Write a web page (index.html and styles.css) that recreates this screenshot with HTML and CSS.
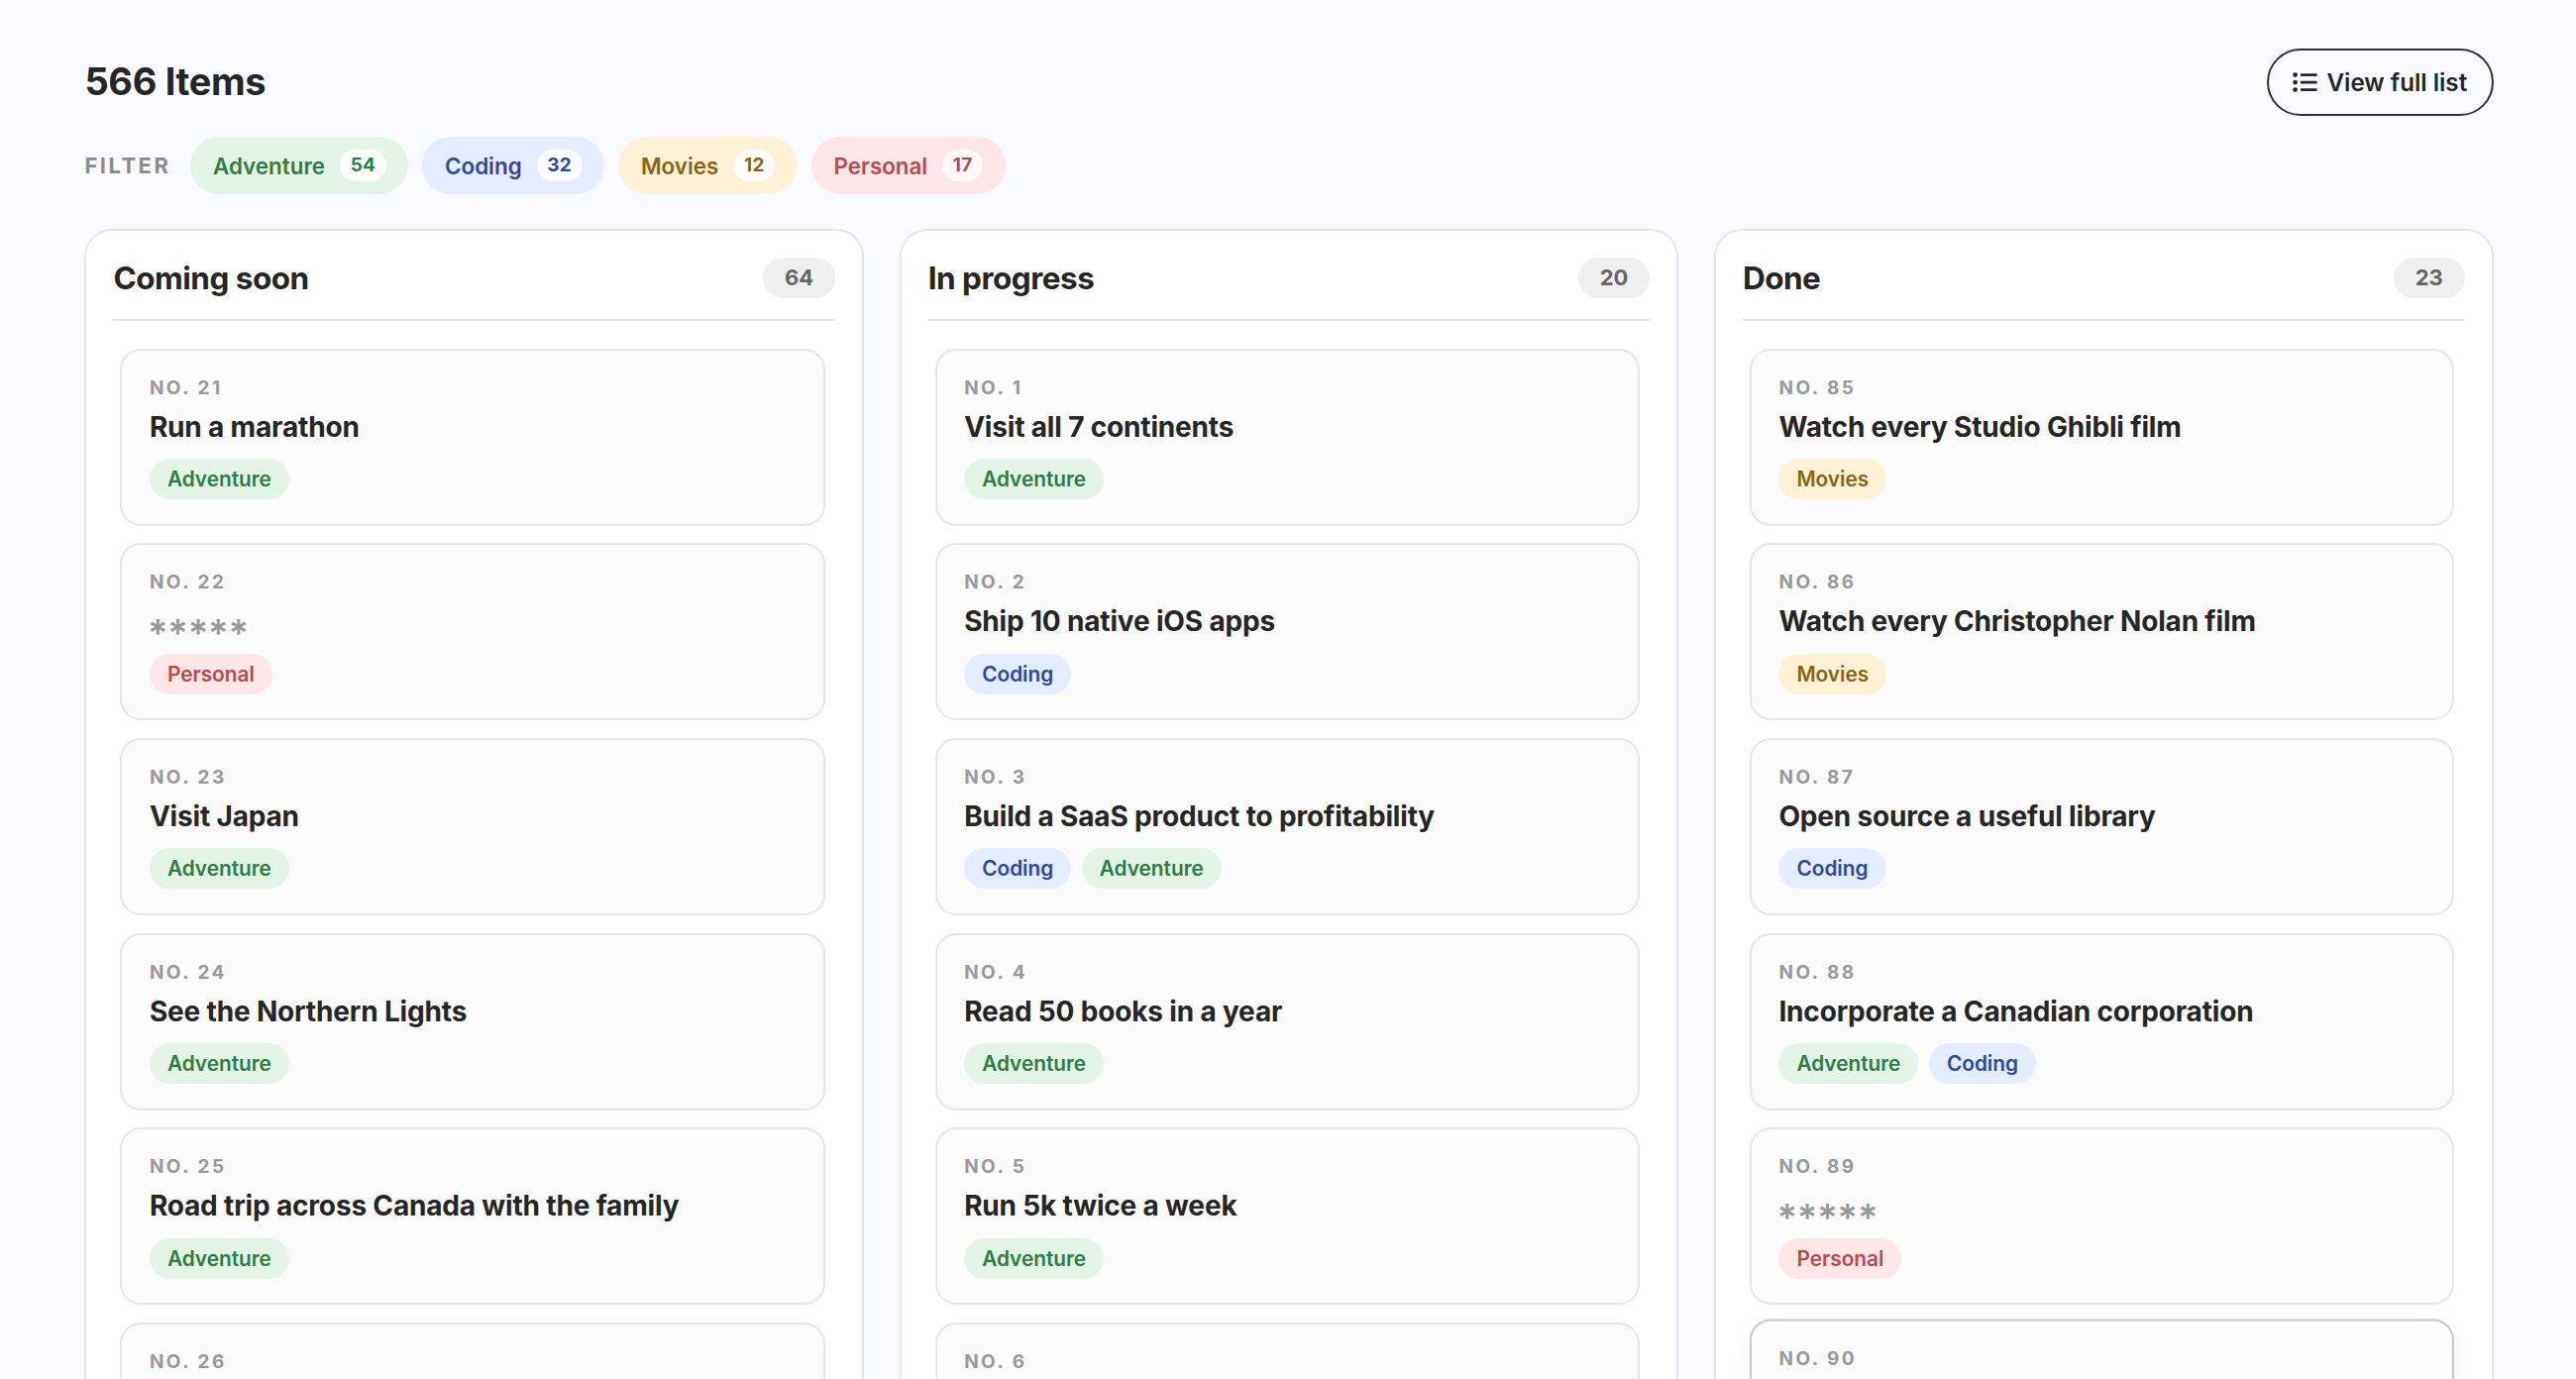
FILE: index.html
```
<!DOCTYPE html>
<html lang="en">

<head>
    <meta charset="UTF-8">
    <meta name="viewport" content="width=device-width, initial-scale=1.0">
    <title>566 Items</title>
    <link rel="stylesheet" href="styles.css">
</head>

<body>
    <div class="page">
        <header class="header">
            <h1>566 Items</h1>
            <button class="view-btn" type="button">
                <svg class="list-icon" viewBox="0 0 25 22" fill="currentColor">
                    <circle cx="2.6" cy="3.6" r="2.4"/>
                    <circle cx="2.6" cy="11.1" r="2.4"/>
                    <circle cx="2.6" cy="18.6" r="2.4"/>
                    <rect x="7.8" y="2.3" width="17" height="2.6" rx="1.2"/>
                    <rect x="7.8" y="9.8" width="17" height="2.6" rx="1.2"/>
                    <rect x="7.8" y="17.3" width="17" height="2.6" rx="1.2"/>
                </svg>
                View full list
            </button>
        </header>

        <div class="filters">
            <span class="filter-label">Filter</span>
            <button class="filter adventure" type="button">Adventure <span class="filter-count">54</span></button>
            <button class="filter coding" type="button">Coding <span class="filter-count">32</span></button>
            <button class="filter movies" type="button">Movies <span class="filter-count">12</span></button>
            <button class="filter personal" type="button">Personal <span class="filter-count">17</span></button>
        </div>

        <main class="board">
            <section class="column">
                <div class="column-header">
                    <h2>Coming soon</h2>
                    <span class="column-count">64</span>
                </div>
                <div class="cards">
                    <article class="card">
                        <div class="card-number">No. 21</div>
                        <h3>Run a marathon</h3>
                        <div class="tags"><span class="tag adventure">Adventure</span></div>
                    </article>
                    <article class="card">
                        <div class="card-number">No. 22</div>
                        <h3 class="masked">*****</h3>
                        <div class="tags"><span class="tag personal">Personal</span></div>
                    </article>
                    <article class="card">
                        <div class="card-number">No. 23</div>
                        <h3>Visit Japan</h3>
                        <div class="tags"><span class="tag adventure">Adventure</span></div>
                    </article>
                    <article class="card">
                        <div class="card-number">No. 24</div>
                        <h3>See the Northern Lights</h3>
                        <div class="tags"><span class="tag adventure">Adventure</span></div>
                    </article>
                    <article class="card">
                        <div class="card-number">No. 25</div>
                        <h3>Road trip across Canada with the family</h3>
                        <div class="tags"><span class="tag adventure">Adventure</span></div>
                    </article>
                    <article class="card">
                        <div class="card-number">No. 26</div>
                    </article>
                </div>
            </section>

            <section class="column">
                <div class="column-header">
                    <h2>In progress</h2>
                    <span class="column-count">20</span>
                </div>
                <div class="cards">
                    <article class="card">
                        <div class="card-number">No. 1</div>
                        <h3>Visit all 7 continents</h3>
                        <div class="tags"><span class="tag adventure">Adventure</span></div>
                    </article>
                    <article class="card">
                        <div class="card-number">No. 2</div>
                        <h3>Ship 10 native iOS apps</h3>
                        <div class="tags"><span class="tag coding">Coding</span></div>
                    </article>
                    <article class="card">
                        <div class="card-number">No. 3</div>
                        <h3>Build a SaaS product to profitability</h3>
                        <div class="tags"><span class="tag coding">Coding</span><span class="tag adventure">Adventure</span></div>
                    </article>
                    <article class="card">
                        <div class="card-number">No. 4</div>
                        <h3>Read 50 books in a year</h3>
                        <div class="tags"><span class="tag adventure">Adventure</span></div>
                    </article>
                    <article class="card">
                        <div class="card-number">No. 5</div>
                        <h3>Run 5k twice a week</h3>
                        <div class="tags"><span class="tag adventure">Adventure</span></div>
                    </article>
                    <article class="card">
                        <div class="card-number">No. 6</div>
                    </article>
                </div>
            </section>

            <section class="column">
                <div class="column-header">
                    <h2>Done</h2>
                    <span class="column-count">23</span>
                </div>
                <div class="cards">
                    <article class="card">
                        <div class="card-number">No. 85</div>
                        <h3>Watch every Studio Ghibli film</h3>
                        <div class="tags"><span class="tag movies">Movies</span></div>
                    </article>
                    <article class="card">
                        <div class="card-number">No. 86</div>
                        <h3>Watch every Christopher Nolan film</h3>
                        <div class="tags"><span class="tag movies">Movies</span></div>
                    </article>
                    <article class="card">
                        <div class="card-number">No. 87</div>
                        <h3>Open source a useful library</h3>
                        <div class="tags"><span class="tag coding">Coding</span></div>
                    </article>
                    <article class="card">
                        <div class="card-number">No. 88</div>
                        <h3>Incorporate a Canadian corporation</h3>
                        <div class="tags"><span class="tag adventure">Adventure</span><span class="tag coding">Coding</span></div>
                    </article>
                    <article class="card">
                        <div class="card-number">No. 89</div>
                        <h3 class="masked">*****</h3>
                        <div class="tags"><span class="tag personal">Personal</span></div>
                    </article>
                    <article class="card active">
                        <div class="card-number">No. 90</div>
                    </article>
                </div>
            </section>
        </main>
    </div>
</body>

</html>
```
FILE: styles.css
```
* {
    box-sizing: border-box;
}

body {
    margin: 0;
    background: #f9faff;
    color: #262626;
    font-family: Inter, "Liberation Sans", sans-serif;
}

h1, h2, h3 {
    margin: 0;
    font-weight: 700;
}

button {
    font-family: inherit;
    cursor: pointer;
}

.page {
    height: 100vh;
    padding: 49px 83.3px 0 85.4px;
    overflow: hidden;
}

.header {
    display: flex;
    align-items: center;
    justify-content: space-between;
}

h1 {
    margin-bottom: 2px;
    font-size: 38px;
    line-height: 48px;
    letter-spacing: -0.35px;
}

.view-btn {
    display: flex;
    align-items: center;
    gap: 9px;
    height: 68px;
    padding: 0 24.5px;
    border: 2px solid #333;
    border-radius: 34px;
    background: transparent;
    color: #262626;
    font-size: 24.2px;
    font-weight: 600;
}

.list-icon {
    width: 25px;
    height: 22px;
}

.filters {
    display: flex;
    align-items: center;
    gap: 14px;
    margin-top: 21px;
}

.filter-label {
    margin-right: 6px;
    color: #8c8c8c;
    font-size: 22px;
    font-weight: 700;
    letter-spacing: 2.5px;
    text-transform: uppercase;
}

.filter {
    display: flex;
    align-items: center;
    gap: 15px;
    height: 58px;
    padding: 0 22.6px;
    border: none;
    border-radius: 29px;
    font-size: 22.4px;
    font-weight: 600;
}

.filter-count {
    height: 32px;
    padding: 0 10.6px;
    border-radius: 16px;
    background: rgba(255, 255, 255, 0.8);
    font-size: 19px;
    font-weight: 700;
    line-height: 32px;
    letter-spacing: 0.3px;
}

.adventure {
    background: #e3f3e6;
    color: #2e7d46;
}

.coding {
    background: #e4edff;
    color: #2c4a9c;
}

.movies {
    background: #fff1d6;
    color: #8a6414;
}

.personal {
    background: #fde6e8;
    color: #b94a4c;
}

.board {
    display: grid;
    grid-template-columns: repeat(3, 1fr);
    gap: 35.5px;
    margin-top: 35px;
}

.column {
    padding: 27px;
    border: 2px solid #e6e6e6;
    border-radius: 28px;
    background: #fff;
}

.column-header {
    display: flex;
    align-items: center;
    justify-content: space-between;
    padding-bottom: 21px;
    border-bottom: 2px solid #e6e6e6;
}

h2 {
    font-size: 31.5px;
    line-height: 41px;
    letter-spacing: -0.5px;
}

.column-count {
    height: 41px;
    padding: 0 22px;
    border-radius: 21px;
    background: #efefef;
    color: #666;
    font-size: 22px;
    font-weight: 700;
    line-height: 41px;
}

.cards {
    display: flex;
    flex-direction: column;
    gap: 17.7px;
    padding: 27.6px 10.4px 0 7.1px;
}

.card {
    flex: none;
    height: 179px;
    padding: 26px 27.4px;
    border: 2px solid #e6e6e6;
    border-radius: 21px;
    background: #fafafa;
}

.card.active {
    border-color: #c8c8c8;
    box-shadow: 0 7px 21px rgba(0, 0, 0, 0.06);
    transform: translateY(-3.5px);
}

.card-number {
    color: #999;
    font-size: 19px;
    font-weight: 700;
    line-height: 24px;
    letter-spacing: 2.5px;
    text-transform: uppercase;
}

h3 {
    height: 37px;
    margin-top: 9px;
    font-size: 28px;
    line-height: 37px;
    letter-spacing: -0.17px;
}

h3.masked {
    margin-left: -2px;
    padding-top: 12px;
    color: #999;
    font-size: 38px;
    font-weight: 600;
    letter-spacing: -0.1px;
}

.tags {
    display: flex;
    gap: 10.5px;
    margin-top: 13.4px;
}

.tag {
    height: 41px;
    padding: 0 18px;
    border-radius: 21px;
    font-size: 20.8px;
    font-weight: 600;
    line-height: 41px;
}
```
